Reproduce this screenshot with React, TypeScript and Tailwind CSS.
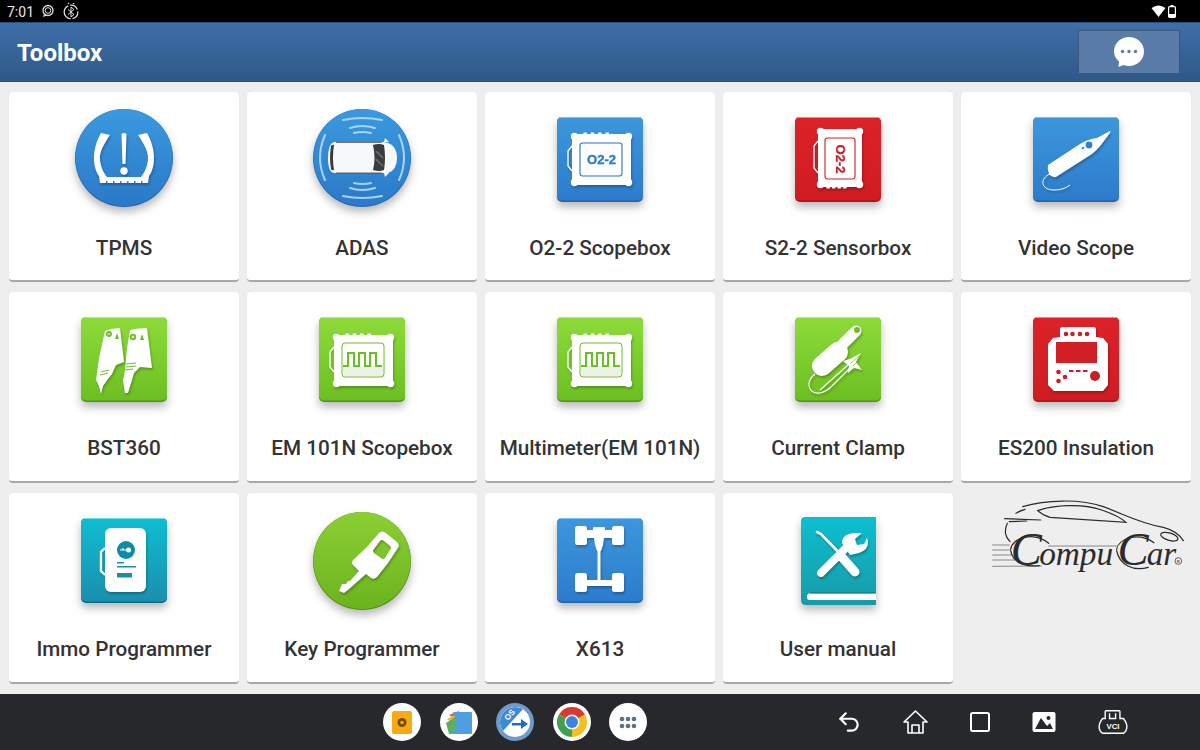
import React from 'react';
import { Undo2 } from 'lucide-react';

const ICON_SHADOW = 'drop-shadow-[0_5px_4px_rgba(0,0,0,0.28)]';
const GLYPH_SHADOW = 'drop-shadow-[1px_2px_1px_rgba(0,0,0,0.25)]';

const Tile = ({ id, top, bottom, edge, light }: { id: string; top: string; bottom: string; edge: string; light: string }) => (
    <>
        <defs>
            <linearGradient id={id} x1="0" y1="0" x2="0" y2="1">
                <stop offset="0" stopColor={top} />
                <stop offset="1" stopColor={bottom} />
            </linearGradient>
        </defs>
        <rect x="7" y="9" width="86" height="85" rx="5" fill={edge} />
        <rect x="7" y="9" width="86" height="83.5" rx="5" fill={`url(#${id})`} />
        <path d="M10 9.500 H90" stroke={light} strokeWidth="1" />
    </>
);

const Blue = ({ id }: { id: string }) => <Tile id={id} top="#3d97dd" bottom="#2c7ccb" edge="#1f63a8" light="#7cc4ee" />;
const Green = ({ id }: { id: string }) => <Tile id={id} top="#8ddb3a" bottom="#6cbf22" edge="#4f9418" light="#b4ec80" />;
const Red = ({ id }: { id: string }) => <Tile id={id} top="#dc2229" bottom="#d11b22" edge="#a5141a" light="#ef8b80" />;

const Disc = ({ id, top, bottom, edge }: { id: string; top: string; bottom: string; edge: string }) => (
    <>
        <defs>
            <linearGradient id={id} x1="0" y1="0" x2="0" y2="1">
                <stop offset="0" stopColor={top} />
                <stop offset="1" stopColor={bottom} />
            </linearGradient>
        </defs>
        <circle cx="50" cy="50" r="49" fill={edge} />
        <circle cx="50" cy="49.500" r="48.500" fill={`url(#${id})`} />
    </>
);

const TpmsIcon = () => (
    <svg width="100" height="100" viewBox="0 0 100 100" className={ICON_SHADOW}>
        <Disc id="tpms" top="#3b99de" bottom="#2b79c8" edge="#2168b0" />
        <g fill="#fff" className={GLYPH_SHADOW}>
            <path d="M27 25 L36 27 C30 36 26 43 26 50 C26 57 29 64 33 69 L67 69 C71 64 74 57 74 50 C74 43 70 36 64 27 L73 25 C78 34 80 42 80 50 C80 58 78 64 75 68 L74 75 L26 75 L25 68 C22 64 20 58 20 50 C20 42 22 34 27 25Z" />
            <path d="M47.500 26 Q50 24 52.500 26 L51.500 56 H48.500Z" />
            <circle cx="50" cy="63" r="3.700" />
        </g>
        <g fill="#2f80cd">
            <rect x="32" y="73" width="1.500" height="2" />
            <rect x="39" y="73" width="1.500" height="2" />
            <rect x="46" y="73" width="1.500" height="2" />
            <rect x="53" y="73" width="1.500" height="2" />
            <rect x="60" y="73" width="1.500" height="2" />
            <rect x="67" y="73" width="1.500" height="2" />
        </g>
    </svg>
);

const AdasIcon = () => (
    <svg width="100" height="100" viewBox="0 0 100 100" className={ICON_SHADOW}>
        <Disc id="adas" top="#3b99de" bottom="#2b79c8" edge="#2168b0" />
        <g fill="none" stroke="#a6d5f3" strokeWidth="2" strokeLinecap="round">
            <path d="M31 12 Q50 8 70 12" />
            <path d="M38 20 Q50 16 63 20" />
            <path d="M42 25 Q50 23 59 25" />
            <path d="M31 88 Q50 92 70 88" />
            <path d="M38 80 Q50 84 63 80" />
            <path d="M42 75 Q50 77 59 75" />
            <path d="M13 27 Q3 50 13 72" />
            <path d="M87 27 Q97 50 87 72" />
        </g>
        <path d="M22 34 H72 L76 35 Q85 38 85 50 Q85 62 76 65 L72 65 H22 Q16 64 16 50 Q16 36 22 34Z" fill="#f7f8f9" />
        <path d="M61 37 Q67 35 72 37 Q74 50 72 62 Q67 64 61 62 Q64 50 61 37Z" fill="#3a3d40" />
        <path d="M64 43 L71 50 M63.500 51 L71 58" stroke="#6b6e72" strokeWidth="1.600" />
        <path d="M19 38 Q21 36 22 37 Q20 50 22 62 Q20 63 19 61 Q17 50 19 38Z" fill="#3a3d40" />
        <path d="M24 34.500 H70 M24 65 H70" stroke="#33383d" strokeWidth="0.700" />
        <path d="M72 34 L73 30 L77 34Z M72 65 L73 69 L77 65Z" fill="#fff" />
    </svg>
);

// the rounded tablet shape shared by the scope box icons
const ScopeBody = ({ x, y, w, h, fill, bumpsOn }: { x: number; y: number; w: number; h: number; fill: string; bumpsOn: 'top' | 'bottom' }) => {
    const bumpY = bumpsOn === 'top' ? y - 0.5 : y + h - 1;
    return (
        <g className={GLYPH_SHADOW}>
            <rect x={x + 1} y={y + 1} width={w - 2} height={h - 2} rx="5" fill={fill} />
            <circle cx={x + 3.5} cy={y + 3.5} r="3.700" fill={fill} />
            <circle cx={x + w - 3.5} cy={y + 3.5} r="3.700" fill={fill} />
            <circle cx={x + 3.5} cy={y + h - 3.5} r="3.700" fill={fill} />
            <circle cx={x + w - 3.5} cy={y + h - 3.5} r="3.700" fill={fill} />
            {[0.2, 0.32, 0.44, 0.56].map((p) => (
                <rect key={p} x={x + w * p} y={bumpY} width="4" height="1.500" rx="0.700" fill={fill} />
            ))}
            <path d={`M${x + 1} ${y + 13} L${x - 3} ${y + 18} V${y + h - 20} L${x + 1} ${y + h - 15}`} fill="none" stroke={fill} strokeWidth="1.400" />
        </g>
    );
};

const O2Icon = () => (
    <svg width="100" height="100" viewBox="0 0 100 100" className={ICON_SHADOW}>
        <Blue id="o2" />
        <ScopeBody x={21} y={25} w={61} h={53} fill="#fff" bumpsOn="top" />
        <rect x="30" y="35" width="42" height="33" rx="2.500" fill="#fbfdff" stroke="#2a75bf" strokeWidth="1.100" />
        <text x="51.500" y="55.500" textAnchor="middle" fontFamily="'Liberation Sans', sans-serif" fontWeight="700" fontSize="12" fill="#2a7bc9" stroke="#2a7bc9" strokeWidth="0.300" textLength="29" lengthAdjust="spacingAndGlyphs">O2-2</text>
    </svg>
);

const S2Icon = () => (
    <svg width="100" height="100" viewBox="0 0 100 100" className={ICON_SHADOW}>
        <Red id="s2" />
        <ScopeBody x={29} y={20} w={46} h={60} fill="#fff" bumpsOn="bottom" />
        <rect x="37" y="30" width="30" height="41" rx="2.500" fill="#fff" stroke="#c72028" strokeWidth="1.100" />
        <text x="0" y="0" transform="translate(48 51) rotate(90)" textAnchor="middle" fontFamily="'Liberation Sans', sans-serif" fontWeight="700" fontSize="12" fill="#c9202a" stroke="#c9202a" strokeWidth="0.300" textLength="29" lengthAdjust="spacingAndGlyphs">O2-2</text>
    </svg>
);

const VideoScopeIcon = () => (
    <svg width="100" height="100" viewBox="0 0 100 100" className={ICON_SHADOW}>
        <Blue id="vs" />
        <g className={GLYPH_SHADOW}>
            <path d="M22 57 L54 36 Q62 31 71 30 L84 23 Q85 24 84 25 L75 37 Q71 42 66 46 L30 69 Q26 70 23 66 Q21 61 22 57Z" fill="#fff" />
            <path d="M24 66 C14 70 14 82 28 82 Q38 82 44 77" fill="none" stroke="#fff" strokeWidth="1" />
        </g>
        <circle cx="63" cy="37" r="3.400" fill="#2f80cd" />
        <rect x="55.500" y="39" width="3" height="2" rx="1" fill="#2f80cd" transform="rotate(-32 57 40)" />
    </svg>
);

const BstIcon = () => (
    <svg width="100" height="100" viewBox="0 0 100 100" className={ICON_SHADOW}>
        <Green id="bst" />
        <g fill="#fff" className={GLYPH_SHADOW}>
            <path d="M31 23 Q38 20 46 20 L50 54 L42 57 L38 66 L34 71 L29 78 L27 86 L25 78 L22 72 L25 50Z" />
            <path d="M56 22 Q64 20 73 20 L78 60 L66 59 L60 65 L58 72 L54 85 L51 85 L49 73 L51 62 L53 40Z" />
        </g>
        <g fill="#6cbf22">
            <circle cx="35" cy="26" r="3" />
            <path d="M43 25 L45 31 H41Z" />
            <circle cx="59" cy="29" r="3.200" />
            <path d="M68 26 L70 32 H66Z" />
        </g>
        <path d="M33.500 26 H36.500 M57.500 29 H60.500 M59 27.500 V30.500" stroke="#fff" strokeWidth="0.900" />
        <path d="M27 64 L35 62 M26 67 L34 65 M52 56 L62 55 M52 59 L62 58 M51 62 L59 61" stroke="#6cbf22" strokeWidth="1" />
    </svg>
);

const EmIcon = ({ id }: { id: string }) => (
    <svg width="100" height="100" viewBox="0 0 100 100" className={ICON_SHADOW}>
        <Green id={id} />
        <ScopeBody x={21} y={26} w={61} h={53} fill="#fff" bumpsOn="top" />
        <rect x="30" y="35" width="42" height="34" rx="3" fill="#fff" stroke="#6cbf22" strokeWidth="1" />
        <rect x="31" y="58" width="40" height="10" fill="#eef1ea" />
        <path d="M31 58 H36 V45 H42 V58 H47 V45 H53 V58 H58 V45 H64 V58 H70" fill="none" stroke="#6cbf22" strokeWidth="2" />
    </svg>
);

const ClampIcon = () => (
    <svg width="100" height="100" viewBox="0 0 100 100" className={ICON_SHADOW}>
        <Green id="clamp" />
        <g className={GLYPH_SHADOW}>
            <path d="M68 23 L54 37" stroke="#fff" strokeWidth="11" strokeLinecap="round" />
            <path d="M50 44 L34 58" stroke="#fff" strokeWidth="20" strokeLinecap="round" />
            <path d="M27 66 C17 74 20 86 32 85 Q38 84 44 78 L62 60 M32 82 L60 57" fill="none" stroke="#fff" strokeWidth="1.200" />
            <path d="M55 53 L62 51 L73 45 L68 54 L74 62 L66 60 L60 65 L61 58Z" fill="#fff" />
        </g>
        <circle cx="69" cy="22" r="3" fill="#6cbf22" />
        <path d="M63 55 L71 48 M65 58 L71 52" stroke="#6cbf22" strokeWidth="0.700" />
    </svg>
);

const Es200Icon = () => (
    <svg width="100" height="100" viewBox="0 0 100 100" className={ICON_SHADOW}>
        <Red id="es" />
        <path d="M34 20 L36 19 H68 L70 20 V29 L77 30 L82 36 V77 L77 83 H28 L22 77 V36 L27 30 L34 29Z" fill="#fff" className={GLYPH_SHADOW} />
        <rect x="30" y="34" width="41" height="21" fill="#d11f26" />
        <g fill="#c91f26">
            <circle cx="40" cy="26" r="2.300" />
            <circle cx="46.500" cy="26" r="2.300" />
            <circle cx="54" cy="26" r="2.300" />
            <circle cx="61" cy="26" r="2.300" />
            <circle cx="32.500" cy="64" r="2.300" />
            <circle cx="39" cy="69" r="2.300" />
            <circle cx="32.500" cy="73" r="2.300" />
            <rect x="43" y="62" width="4.500" height="2" />
            <rect x="50" y="62" width="4.500" height="2" />
            <rect x="57" y="62" width="4.500" height="2" />
            <circle cx="69" cy="68" r="5" />
        </g>
    </svg>
);

const ImmoIcon = () => (
    <svg width="100" height="100" viewBox="0 0 100 100" className={ICON_SHADOW}>
        <Tile id="immo" top="#0fbdd1" bottom="#1a8fae" edge="#0e6b86" light="#6fdbe6" />
        <g className={GLYPH_SHADOW}>
            <rect x="31" y="19" width="41" height="64" rx="6" fill="#fff" />
            <path d="M31 39 L27 43 V62 L31 66" fill="none" stroke="#fff" strokeWidth="2.400" />
        </g>
        <circle cx="52" cy="41" r="9" fill="#0e8ba6" />
        <path d="M46 41 H52 M49 39 V41" stroke="#fff" strokeWidth="1.200" />
        <circle cx="54.500" cy="41" r="2.500" fill="#fff" />
        <rect x="43" y="53" width="7" height="1.500" fill="#188ea8" />
        <rect x="43" y="57" width="19" height="1.500" fill="#188ea8" />
        <rect x="43" y="64" width="15" height="4.500" fill="#188ea8" />
    </svg>
);

const KeyIcon = () => (
    <svg width="100" height="100" viewBox="0 -2 100 100" className={`overflow-visible ${ICON_SHADOW}`}>
        <Disc id="key" top="#8ccf34" bottom="#6bb31f" edge="#558f18" />
        <g className={GLYPH_SHADOW}>
            <path fillRule="evenodd" fill="#fff" d="M67 22 Q70 19 74 22 L85 31 Q88 34 86 37 L76 52 L65 66 Q62 69 59 67 L54 63 L36 79 L32 82 L27 80 L30 73 L34 73 L36 70 L38 70 L47 60 L41 54 Q39 52 41 49 L54 37Z M68 30 Q70 28 72 30 L78 35 Q80 37 78 39 L73 47 Q71 49 69 47 L62 42 Q60 40 62 38Z" />
        </g>
    </svg>
);

const X613Icon = () => (
    <svg width="100" height="100" viewBox="0 0 100 100" className={ICON_SHADOW}>
        <Blue id="x613" />
        <g fill="#fff" className={GLYPH_SHADOW}>
            <rect x="25" y="17" width="12" height="19" rx="2.500" />
            <rect x="62" y="17" width="12" height="19" rx="2.500" />
            <rect x="33" y="21" width="32" height="8" />
            <rect x="43" y="18" width="12" height="6" rx="1" />
            <path d="M44 29 H54 L53 36 L51 42 H47 L45 36Z" />
            <rect x="47.500" y="42" width="3" height="30" />
            <rect x="25" y="64" width="12" height="19" rx="2.500" />
            <rect x="62" y="64" width="12" height="19" rx="2.500" />
            <rect x="33" y="71" width="32" height="6" />
        </g>
    </svg>
);

const ManualIcon = () => (
    <svg width="100" height="100" viewBox="0 0 100 100" className={ICON_SHADOW}>
        <defs>
            <linearGradient id="manual" x1="0" y1="0" x2="0" y2="1">
                <stop offset="0" stopColor="#0cbfd0" />
                <stop offset="1" stopColor="#189aa8" />
            </linearGradient>
        </defs>
        <path d="M17 8 H88 V84 H22 Q19 84 19 88 Q19 91 22 91 H88 V96 H18 Q13 96 13 91 V12 Q13 8 17 8Z" fill="url(#manual)" />
        <path d="M19 88 Q19 84.500 22 84.500 H88 V91 H22 Q19 91 19 88Z" fill="#fff" />
        <path d="M22 84 H88" stroke="#0f7080" strokeWidth="1" />
        <g className={GLYPH_SHADOW}>
            <path d="M29 23 L33 25 L56 49" stroke="#fff" strokeWidth="2.600" fill="none" strokeLinecap="round" />
            <path d="M52 46 L67 63" stroke="#fff" strokeWidth="9" strokeLinecap="round" />
            <path d="M33 64 L58 39" stroke="#fff" strokeWidth="8" strokeLinecap="round" />
            <path d="M54 34 Q54 25 66 24 L74 24 L67 30 L69 36 L76 35 L79 29 Q83 40 71 44 L62 46 Z" fill="#fff" />
        </g>
    </svg>
);

const TOOLS: { label: string; icon: React.ReactNode }[] = [
    { label: 'TPMS', icon: <TpmsIcon /> },
    { label: 'ADAS', icon: <AdasIcon /> },
    { label: 'O2-2 Scopebox', icon: <O2Icon /> },
    { label: 'S2-2 Sensorbox', icon: <S2Icon /> },
    { label: 'Video Scope', icon: <VideoScopeIcon /> },
    { label: 'BST360', icon: <BstIcon /> },
    { label: 'EM 101N Scopebox', icon: <EmIcon id="em1" /> },
    { label: 'Multimeter(EM 101N)', icon: <EmIcon id="em2" /> },
    { label: 'Current Clamp', icon: <ClampIcon /> },
    { label: 'ES200 Insulation', icon: <Es200Icon /> },
    { label: 'Immo Programmer', icon: <ImmoIcon /> },
    { label: 'Key Programmer', icon: <KeyIcon /> },
    { label: 'X613', icon: <X613Icon /> },
    { label: 'User manual', icon: <ManualIcon /> },
];

const ToolCard = ({ label, icon }: { label: string; icon: React.ReactNode }) => (
    <div className="flex flex-col items-center rounded-[4px] bg-white border-b-2 border-[#a8a8a8] pt-4 shadow-[0_0_1px_rgba(0,0,0,0.08)]">
        {icon}
        <div className="mt-[28px] text-[20.700px] leading-[24px] font-medium text-[#333333] whitespace-nowrap">{label}</div>
    </div>
);

const CompuCarLogo = () => (
    <svg width="230" height="191" viewBox="-27 9 690 573" className="block">
        <g fill="none" stroke="#2a2a2a" strokeWidth="3.600" strokeLinecap="round">
            <path d="M138 70 Q150 62 165 58 M158 50 C225 30 330 25 400 50 C470 76 510 100 580 112 C610 120 630 135 640 152" />
            <path d="M203 62 C250 44 340 40 395 60 C430 72 455 85 468 97 L240 82 C225 78 212 70 203 62Z" />
            <path d="M104 86 L212 90 M118 95 L170 93" />
            <path d="M112 100 C102 120 105 140 120 155" />
            <ellipse cx="598" cy="140" rx="27" ry="11" transform="rotate(17 598 140)" />
            <path d="M68 165 L118 165 M68 180 L118 180 M68 195 L128 195 M68 210 L140 210 M68 229 L215 228" strokeWidth="2" stroke="#555" />
            <path d="M122 178 C125 145 190 122 236 160" />
            <path d="M122 182 C128 215 160 232 208 227" />
            <path d="M236 168 L440 168" strokeWidth="2" stroke="#555" />
            <path d="M440 178 C445 145 505 125 552 158" />
            <path d="M440 182 C448 225 490 245 535 232" />
        </g>
        <text x="122" y="226" fill="#2b2b2b" fontFamily="'Liberation Serif', serif" fontStyle="italic">
            <tspan fontSize="140">C</tspan>
            <tspan fontSize="100" dx="-8">ompu</tspan>
            <tspan fontSize="140" dx="13">C</tspan>
            <tspan fontSize="100" dx="-6">ar</tspan>
        </text>
        <circle cx="625" cy="213" r="10" fill="none" stroke="#222" strokeWidth="2" />
        <text x="625" y="218" textAnchor="middle" fontSize="13" fontFamily="'Liberation Sans', sans-serif" fill="#222">R</text>
    </svg>
);

const StatusBar = () => (
    <div className="h-[22px] shrink-0 bg-black flex items-center pl-[7px] pr-[24px] text-white">
        <span className="text-[14px] leading-none font-normal text-[#e8e8e8] pt-[1px]">7:01</span>
        <svg width="14" height="14" viewBox="0 0 14 14" className="ml-[7px]">
            <circle cx="7" cy="6.500" r="5" fill="none" stroke="#ddd" strokeWidth="1.300" />
            <circle cx="7" cy="6.500" r="2.800" fill="none" stroke="#ddd" strokeWidth="1" />
            <path d="M3 10 L2 13 L6 11.500Z" fill="#ddd" />
        </svg>
        <svg width="18" height="18" viewBox="0 0 18 18" className="ml-[7px]">
            <circle cx="9" cy="10" r="6.800" fill="none" stroke="#ddd" strokeWidth="1.300" strokeDasharray="9 2 18 2" />
            <path d="M6 7.500 L12 12.500 L9 15 V5 L12 7.500 L6 12.500" fill="none" stroke="#ddd" strokeWidth="1" />
            <circle cx="6.500" cy="1.500" r="0.800" fill="#ddd" />
            <circle cx="11.500" cy="1.500" r="0.800" fill="#ddd" />
        </svg>
        <div className="flex-1" />
        <svg width="15" height="12" viewBox="0 0 15 12">
            <path d="M0.500 3 Q7.500 -2 14.500 3 L7.500 12Z" fill="#fff" />
        </svg>
        <svg width="8" height="13" viewBox="0 0 8 13" className="ml-[2px]">
            <rect x="0.600" y="1.600" width="6.800" height="10.800" rx="1" fill="none" stroke="#fff" strokeWidth="1.200" />
            <rect x="2.500" y="0" width="3" height="1.600" fill="#fff" />
            <rect x="1" y="9" width="6" height="3" fill="#fff" />
        </svg>
    </div>
);

const Header = () => (
    <header className="h-[60px] shrink-0 flex items-center justify-between pl-[17px] pr-[20px] bg-gradient-to-b from-[#3e6fa9] to-[#2f5887] border-t border-[#2a4f7d] border-b border-b-[#2b4f7a]">
        <h1 className="text-[24px] leading-none font-bold text-white pt-[2px]">Toolbox</h1>
        <button className="w-[102px] h-[44px] flex items-center justify-center bg-[#5a7ca8] border border-[#3b5779]">
            <svg width="32" height="32" viewBox="0 0 32 32">
                <path d="M16 1 C24.500 1 31 7.500 31 15.500 C31 23.500 24.500 30 16 30 Q13 30 10.500 29 L5.500 31 L6 25.500 C3 23 1 19.500 1 15.500 C1 7.500 7.500 1 16 1Z" fill="#fff" />
                <circle cx="9.500" cy="15.500" r="1.700" fill="#5a7ca8" />
                <circle cx="16" cy="15.500" r="1.700" fill="#5a7ca8" />
                <circle cx="22.500" cy="15.500" r="1.700" fill="#5a7ca8" />
            </svg>
        </button>
    </header>
);

const Dock = () => (
    <div className="flex items-center gap-[18.500px]">
        <div className="w-[38px] h-[38px] rounded-full bg-white flex items-center justify-center">
            <svg width="20" height="23" viewBox="0 0 20 23">
                <rect width="20" height="23" rx="2" fill="#f9a914" />
                <circle cx="10" cy="11.500" r="4.500" fill="#7a4a10" />
                <circle cx="10" cy="11.500" r="1.800" fill="#f9a914" />
            </svg>
        </div>
        <div className="w-[38px] h-[38px] rounded-full bg-white flex items-center justify-center">
            <svg width="26" height="23" viewBox="0 0 26 23">
                <path d="M3 4 L13 0 V10Z" fill="#e2574c" />
                <path d="M1 8 L13 2 V16Z" fill="#f2b632" />
                <path d="M0 12 L9 6 V23 H3Z" fill="#5bb05f" />
                <path d="M7 1 H25 Q26 1 26 2 V22 Q26 23 25 23 H5 L9 18 V6Z" fill="#4f9fe0" />
            </svg>
        </div>
        <div className="w-[38px] h-[38px] rounded-full bg-[#6f9bcb] flex items-center justify-center">
            <div className="w-[30px] h-[30px] rounded-full bg-white flex items-center justify-center overflow-hidden">
                <svg width="30" height="30" viewBox="0 0 30 30">
                    <path d="M15 0 A15 15 0 0 0 3 24 L23 2 Q19 0 15 0Z" fill="#3e8ad8" />
                    <text x="0" y="0" transform="translate(8 14) rotate(-50)" fontSize="8" fontWeight="700" fill="#fff" fontFamily="'Liberation Sans', sans-serif">OS</text>
                    <path d="M12 16 H21 V12 L28 17 L21 22 V18.500 H12Z" fill="#1f6fbf" />
                </svg>
            </div>
        </div>
        <div className="w-[38px] h-[38px] rounded-full bg-white flex items-center justify-center">
            <svg width="30" height="30" viewBox="0 0 30 30">
                <path d="M15 15 L2 7.500 A15 15 0 0 1 28 7.500Z" fill="#d93a2f" />
                <path d="M15 15 L28 7.500 A15 15 0 0 1 15 30Z" fill="#f4c020" />
                <path d="M15 15 L15 30 A15 15 0 0 1 2 7.500Z" fill="#3fa14d" />
                <circle cx="15" cy="15" r="7.500" fill="#fff" />
                <circle cx="15" cy="15" r="6" fill="#3e82e0" />
            </svg>
        </div>
        <div className="w-[38px] h-[38px] rounded-full bg-white flex items-center justify-center">
            <svg width="18" height="13" viewBox="0 0 18 13" fill="#5f7080">
                <circle cx="3" cy="3" r="2.300" />
                <circle cx="9" cy="3" r="2.300" />
                <circle cx="15" cy="3" r="2.300" />
                <circle cx="3" cy="10" r="2.300" />
                <circle cx="9" cy="10" r="2.300" />
                <circle cx="15" cy="10" r="2.300" />
            </svg>
        </div>
    </div>
);

const NavBar = () => (
    <nav className="h-[56px] shrink-0 bg-[#26282b] flex items-center pl-[383px]">
        <Dock />
        <div className="ml-[189px] flex items-center gap-[41px] text-white">
            <Undo2 className="w-[26px] h-[26px]" strokeWidth={2} />
            <svg width="25" height="24" viewBox="0 0 25 24" fill="none" stroke="#fff" strokeWidth="1.600" strokeLinejoin="round">
                <path d="M12.500 1 L24 12 H20 V23 H5 V12 H1Z" />
                <path d="M9 23 V15 H16 V23" />
            </svg>
            <svg width="22" height="22" viewBox="0 0 22 22" fill="none" stroke="#fff" strokeWidth="2">
                <rect x="2" y="2" width="18" height="18" rx="1.500" />
            </svg>
            <svg width="24" height="20" viewBox="0 0 24 20">
                <rect x="0.500" y="0" width="23" height="20" rx="2" fill="#fff" />
                <circle cx="16.500" cy="6" r="2" fill="#26282b" />
                <path d="M3 17 L9 6 L15 14 L18 11 L21 17Z" fill="#26282b" />
            </svg>
            <svg width="34" height="26" viewBox="0 0 36 30" fill="none" stroke="#fff" strokeWidth="1.600" className="ml-[-1px]">
                <path d="M9 11 V3 Q9 2 10 2 H25 Q26 2 26 3 V11 H30 Q34 16 34 20 Q34 26 30 28 H6 Q2 26 2 20 Q2 16 6 11Z" />
                <path d="M14 5 V11 H21 V5" />
                <text x="18" y="23" textAnchor="middle" fontSize="9" fontWeight="700" fill="#fff" stroke="none" fontFamily="'Liberation Sans', sans-serif">VCI</text>
            </svg>
        </div>
    </nav>
);

export default function App() {
    return (
        <div className="w-[1200px] h-[750px] overflow-hidden flex flex-col bg-[#eeeeee] font-['Roboto',sans-serif]">
            <StatusBar />
            <Header />
            <main className="flex-1 min-h-0 pt-[10px] pl-[9px]">
                <div className="grid grid-cols-[repeat(5,230px)] grid-rows-[190px_191px_191px] gap-x-[8px] gap-y-[10px]">
                    {TOOLS.map((tool) => (
                        <ToolCard key={tool.label} label={tool.label} icon={tool.icon} />
                    ))}
                    <CompuCarLogo />
                </div>
            </main>
            <NavBar />
        </div>
    );
}
